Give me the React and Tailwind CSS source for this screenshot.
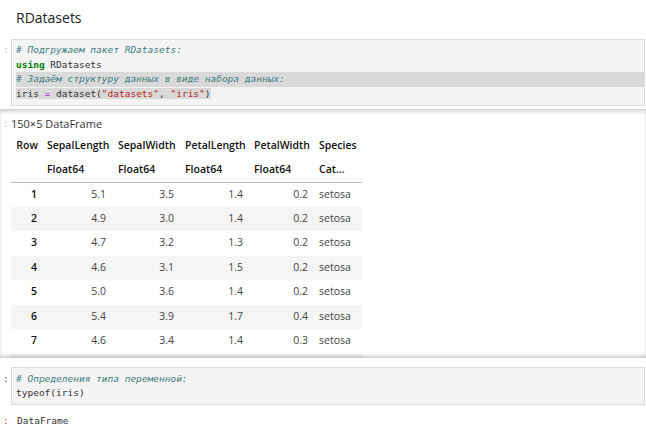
import React from "react";

const rows = [
  [1, "5.1", "3.5", "1.4", "0.2"],
  [2, "4.9", "3.0", "1.4", "0.2"],
  [3, "4.7", "3.2", "1.3", "0.2"],
  [4, "4.6", "3.1", "1.5", "0.2"],
  [5, "5.0", "3.6", "1.4", "0.2"],
  [6, "5.4", "3.9", "1.7", "0.4"],
  [7, "4.6", "3.4", "1.4", "0.3"],
];

const mono = "font-['DejaVu_Sans_Mono',monospace] text-[9.5px]";

export default function App() {
  return (
    <div className="w-[646px] h-[441px] overflow-hidden bg-white font-['Open_Sans',sans-serif] text-[#333]">
      {/* Title */}
      <div className="h-[39px] pl-[16px] pt-[8px] text-[14px] leading-[20px] text-[#222]">RDatasets</div>

      {/* Cell 1 */}
      <div className="flex">
        <div className={`w-[11px] pl-[3px] pt-[4px] leading-[14.5px] text-[#bbb] ${mono}`}>:</div>
        <div className={`flex-1 mr-[1px] border border-[#dcdcdc] bg-[#f4f4f4] pt-[3px] pb-[4px] pl-[4px] leading-[14.5px] ${mono}`}>
          <div className="h-[14.5px] italic text-[#408080]"># Подгружаем пакет RDatasets:</div>
          <div className="h-[14.5px]">
            <span className="font-bold text-[#008000]">using</span> RDatasets
          </div>
          <div className="h-[14.5px] italic text-[#408080] bg-[#d9d9d9]"># Задаём структуру данных в виде набора данных:</div>
          <div className="h-[14.5px]">
            <span className="bg-[#d9d9d9]">
              iris <span className="text-[#aa22ff]">=</span> dataset(<span className="text-[#ba2121]">"datasets"</span>, <span className="text-[#ba2121]">"iris"</span>)
            </span>
          </div>
        </div>
      </div>

      {/* Output scroll area */}
      <div className="relative mt-[3px] h-[249px] overflow-hidden">
        <div className="flex pt-[8px] h-[25px]">
          <div className={`w-[11px] pl-[3px] leading-[14px] text-[#bbb] ${mono}`}>:</div>
          <div className="text-[11px] leading-[14px] text-[#333]">150×5 DataFrame</div>
        </div>
        <table className="ml-[11px] w-[351px] table-fixed border-collapse text-[10.5px]">
          <colgroup>
            <col className="w-[31px]" />
            <col className="w-[70px]" />
            <col className="w-[68px]" />
            <col className="w-[69px]" />
            <col className="w-[65px]" />
            <col className="w-[48px]" />
          </colgroup>
          <thead>
            <tr className="h-[24px] text-[#111]">
              <th className="pr-[4px] text-right font-semibold">Row</th>
              <th className="pl-[5px] text-left font-semibold whitespace-nowrap">SepalLength</th>
              <th className="pl-[6px] text-left font-semibold whitespace-nowrap">SepalWidth</th>
              <th className="pl-[5px] text-left font-semibold whitespace-nowrap">PetalLength</th>
              <th className="pl-[5px] text-left font-semibold whitespace-nowrap">PetalWidth</th>
              <th className="pl-[5px] text-left font-semibold whitespace-nowrap">Species</th>
            </tr>
            <tr className="h-[24px] border-b border-[#bdbdbd] text-[#111]">
              <th></th>
              <th className="pl-[5px] text-left font-semibold">Float64</th>
              <th className="pl-[6px] text-left font-semibold">Float64</th>
              <th className="pl-[5px] text-left font-semibold">Float64</th>
              <th className="pl-[5px] text-left font-semibold">Float64</th>
              <th className="pl-[5px] text-left font-semibold">Cat...</th>
            </tr>
          </thead>
          <tbody>
            {rows.map((r) => (
              <tr key={r[0]} className={`h-[24.5px] ${r[0] % 2 === 0 ? "bg-[#f5f5f5]" : "bg-white"}`}>
                <td className="pr-[5px] text-right font-semibold text-[#111]">{r[0]}</td>
                <td className="pr-[6px] text-right text-[#444]">{r[1]}</td>
                <td className="pr-[6px] text-right text-[#444]">{r[2]}</td>
                <td className="pr-[6px] text-right text-[#444]">{r[3]}</td>
                <td className="pr-[6px] text-right text-[#444]">{r[4]}</td>
                <td className="pl-[5px] text-left text-[#444]">setosa</td>
              </tr>
            ))}
            <tr className="h-[24.5px] bg-[#f5f5f5]">
              <td colSpan={6}></td>
            </tr>
          </tbody>
        </table>
        <div className="pointer-events-none absolute inset-0 shadow-[inset_0_4px_4px_-2px_rgba(0,0,0,0.22),inset_0_-4px_4px_-2px_rgba(0,0,0,0.22)]" />
      </div>

      {/* Cell 2 */}
      <div className="mt-[9px] flex">
        <div className={`w-[11px] pl-[3px] pt-[5px] leading-[14px] text-[#303f9f] ${mono}`}>:</div>
        <div className={`flex-1 mr-[1px] border border-[#dcdcdc] bg-[#f4f4f4] pt-[4px] pb-[4px] pl-[4px] leading-[14px] ${mono}`}>
          <div className="h-[14px] italic text-[#408080]"># Определения типа переменной:</div>
          <div className="h-[14px]">typeof(iris)</div>
        </div>
      </div>

      {/* Output 2 */}
      <div className="mt-[9px] flex">
        <div className={`w-[11px] pl-[3px] leading-[14px] text-[#d84315] ${mono}`}>:</div>
        <div className={`pl-[6px] leading-[14px] text-[#333] ${mono}`}>DataFrame</div>
      </div>
    </div>
  );
}
